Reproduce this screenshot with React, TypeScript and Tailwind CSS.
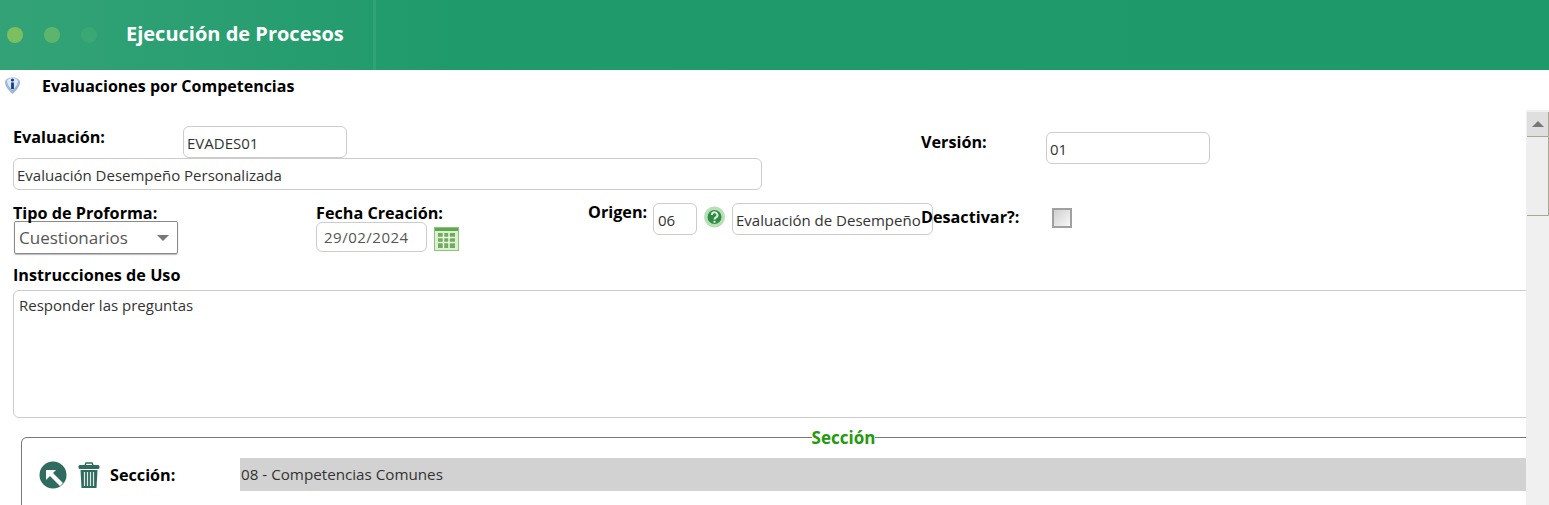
import React from 'react';

const Field: React.FC<{ value: string; className: string }> = ({ value, className }) => {
    return (
        <div className={`border border-[#ccc] rounded-[6px] bg-white text-[#333] flex items-center shrink-0 ${className}`}>
            {value}
        </div>
    );
};

const Label: React.FC<{ children: React.ReactNode; className?: string }> = ({ children, className = '' }) => {
    return <div className={`font-bold text-[16.2px] leading-5 text-black whitespace-nowrap ${className}`}>{children}</div>;
};

const InfoIcon = () => (
    <svg width="17" height="17" viewBox="0 0 17 17">
        <path d="M1 5a7.500 4.500 0 0 1 15 0c0 4-3 8-7.500 12C4 13 1 9 1 5z" fill="#9fb6d6" />
        <path d="M3 4a5.500 3 0 0 1 11 0c0 3-2 6-5.500 9C5 10 3 7 3 4z" fill="#dfe8f4" />
        <circle cx="8.500" cy="3" r="1.600" fill="#173f8f" />
        <rect x="7.100" y="5.500" width="2.800" height="6.500" fill="#173f8f" />
    </svg>
);

const CalendarIcon = () => (
    <svg width="25" height="24" viewBox="0 0 25 24">
        <rect x="0.500" y="0.500" width="24" height="23" fill="#dff0d2" stroke="#8cc47a" />
        <rect x="1" y="1" width="23" height="3" fill="#5fa852" />
        <rect x="4" y="6" width="17" height="15" fill="#6cae5c" />
        <path d="M4 10.500h17M4 15.500h17M9.500 6v15M15 6v15" stroke="#eef7e6" strokeWidth="1.500" />
    </svg>
);

const HelpIcon = () => (
    <svg width="21" height="22" viewBox="0 0 21 22">
        <circle cx="10.500" cy="11" r="10.500" fill="#b9dfb6" />
        <path d="M2 9a9 9 0 0 1 16-3 9 9 0 0 0-16 3z" fill="#5fb06c" />
        <path d="M19 13a9 9 0 0 1-16 3 9 9 0 0 0 16-3z" fill="#8fcb96" />
        <circle cx="10.500" cy="11" r="7" fill="#2f8c46" />
        <path d="M7.800 9a2.800 2.800 0 1 1 4.200 2.400c-1 .6-1.500 1-1.500 2.200" fill="none" stroke="#dff0da" strokeWidth="2" />
        <rect x="9.500" y="14.800" width="2" height="2" fill="#dff0da" />
    </svg>
);

const BackIcon = () => (
    <svg width="28" height="28" viewBox="0 0 28 28">
        <circle cx="14" cy="14" r="13.500" fill="#2f6b5e" />
        <path d="M7 9h10l-3 3 10 10-3 3-10-10-4 4z" fill="#fff" />
    </svg>
);

const TrashIcon = () => (
    <svg width="22" height="26" viewBox="0 0 22 26">
        <path d="M7 3.500 8 1h6l1 2.500" fill="none" stroke="#2f6b5e" strokeWidth="1.500" />
        <rect x="0.500" y="3" width="21" height="4" rx="1.500" fill="#2f6b5e" />
        <path d="M2.500 8h17l-1 18h-15z" fill="#2f6b5e" />
        <path d="M6.500 10v14M9.500 10v14M12.500 10v14M15.500 10v14" stroke="#dfe9e6" strokeWidth="1.200" />
    </svg>
);

export default function App() {
    return (
        <div className="h-[505px] w-[1549px] overflow-hidden bg-white flex flex-col font-['Open_Sans',sans-serif]">
            {/* header */}
            <div className="h-[70px] shrink-0 flex items-center bg-[linear-gradient(90deg,#33a377_0%,#1f9a6b_30%,#1e9a6a_100%)]">
                <div className="flex items-center gap-[21px] pl-[7px] w-[126px] shrink-0">
                    <span className="w-[16px] h-[16px] rounded-full bg-[#7cbf60] blur-[0.5px]" />
                    <span className="w-[16px] h-[16px] rounded-full bg-[#5db56b] blur-[0.5px]" />
                    <span className="w-[16px] h-[16px] rounded-full bg-[#3ba774] blur-[0.5px]" />
                </div>
                <div className="w-[250px] h-full border-r-[3px] border-[#2fa377] flex items-center text-white font-bold text-[20px] pb-[2px]">
                    Ejecución de Procesos
                </div>
            </div>

            {/* page title */}
            <div className="h-[40px] shrink-0 flex items-start pt-[6px] pl-[4px]">
                <div className="mt-[1px]">
                    <InfoIcon />
                </div>
                <div className="ml-[21px] font-bold text-[16px] leading-5 text-black">Evaluaciones por Competencias</div>
            </div>

            <div className="flex-1 flex min-h-0">
                {/* scrolling form */}
                <div className="w-[1526px] overflow-hidden shrink-0">
                    <div className="flex pt-[16px] pl-[13px] h-[48px]">
                        <Label className="w-[170px] pt-[1px]">Evaluación:</Label>
                        <Field value="EVADES01" className="w-[164px] h-[32px] pl-[3px] pt-[3px] text-[15px]" />
                        <Label className="ml-[574px] pt-[6px] w-[125px]">Versión:</Label>
                        <Field value="01" className="w-[164px] h-[32px] mt-[6px] pl-[3px] pt-[3px] text-[15px]" />
                    </div>
                    <div className="pl-[13px]">
                        <Field value="Evaluación Desempeño Personalizada" className="w-[749px] h-[32px] pl-[3px] pt-[2px] text-[15px]" />
                    </div>

                    <div className="flex pl-[13px] pt-[13px] h-[75px]">
                        <div className="w-[303px] shrink-0">
                            <Label>Tipo de Proforma:</Label>
                            <div className="ml-[1px] -mt-[2px] w-[164px] h-[33px] border border-[#8a8a8a] rounded-[2px] shadow-[0_1px_1px_#bbb] flex items-center justify-between pl-[4px] pr-[8px] text-[17px] text-[#555]">
                                Cuestionarios
                                <span className="w-0 h-0 border-x-[6px] border-x-transparent border-t-[6px] border-t-[#777]" />
                            </div>
                        </div>
                        <div className="w-[272px] shrink-0">
                            <Label>Fecha Creación:</Label>
                            <div className="flex items-start -mt-[1px]">
                                <Field value="29/02/2024" className="w-[111px] h-[30px] pl-[7px] text-[15px] tracking-[0.5px] !text-[#555]" />
                                <div className="ml-[7px] mt-[5px]">
                                    <CalendarIcon />
                                </div>
                            </div>
                        </div>
                        <div className="flex items-start w-[333px] shrink-0">
                            <Label className="w-[65px] -mt-[1px]">Origen:</Label>
                            <Field value="06" className="w-[44px] h-[32px] pl-[4px] pt-[3px] text-[15px]" />
                            <div className="ml-[7px] mt-[3px]">
                                <HelpIcon />
                            </div>
                            <Field value="Evaluación de Desempeño" className="ml-[7px] w-[201px] h-[32px] pl-[3px] pt-[2px] -mr-[12px] whitespace-nowrap text-[15px]" />
                        </div>
                        <Label className="w-[131px] shrink-0 pt-[4px]">Desactivar?:</Label>
                        <div className="w-[20px] h-[20px] mt-[5px] border-2 border-[#a0a0a0] bg-[linear-gradient(135deg,#cfcfcf,#f8f8f8)]" />
                    </div>

                    <div className="pl-[13px]">
                        <Label>Instrucciones de Uso</Label>
                        <div className="mt-[5px] w-[1540px] h-[128px] border border-[#ccc] rounded-[6px] pl-[5px] pt-[3px] text-[15px] text-[#333]">
                            Responder las preguntas
                        </div>
                    </div>

                    {/* seccion */}
                    <fieldset className="ml-[21px] mt-[9px] w-[1628px] h-[90px] border border-[#777] rounded-[6px] pl-[17px]">
                        <legend className="mx-auto text-[#229a0b] font-bold text-[17px] leading-5 translate-y-[1px]">Sección</legend>
                        <div className="flex items-center h-[33px] mt-[11px]">
                            <BackIcon />
                            <div className="ml-[11px]">
                                <TrashIcon />
                            </div>
                            <Label className="ml-[10px] w-[130px]">Sección:</Label>
                            <div className="flex-1 h-[33px] bg-[#d2d2d2] flex items-center pl-[1px] text-[15.200px] text-[#333]">
                                08 - Competencias Comunes
                            </div>
                        </div>
                    </fieldset>
                </div>

                {/* scrollbar */}
                <div className="w-[23px] shrink-0 bg-[#f0f0f0] flex flex-col pt-[2px]">
                    <div className="h-[24px] ml-[1px] bg-[#dfdfdf] border-r border-[#a9a98f] flex items-center justify-center">
                        <span className="w-0 h-0 border-x-[6px] border-x-transparent border-b-[6px] border-b-[#777]" />
                    </div>
                    <div className="h-[80px] ml-[1px] border-y border-r border-[#a9a98f] bg-[#eeeeee]" />
                </div>
            </div>
        </div>
    );
}
